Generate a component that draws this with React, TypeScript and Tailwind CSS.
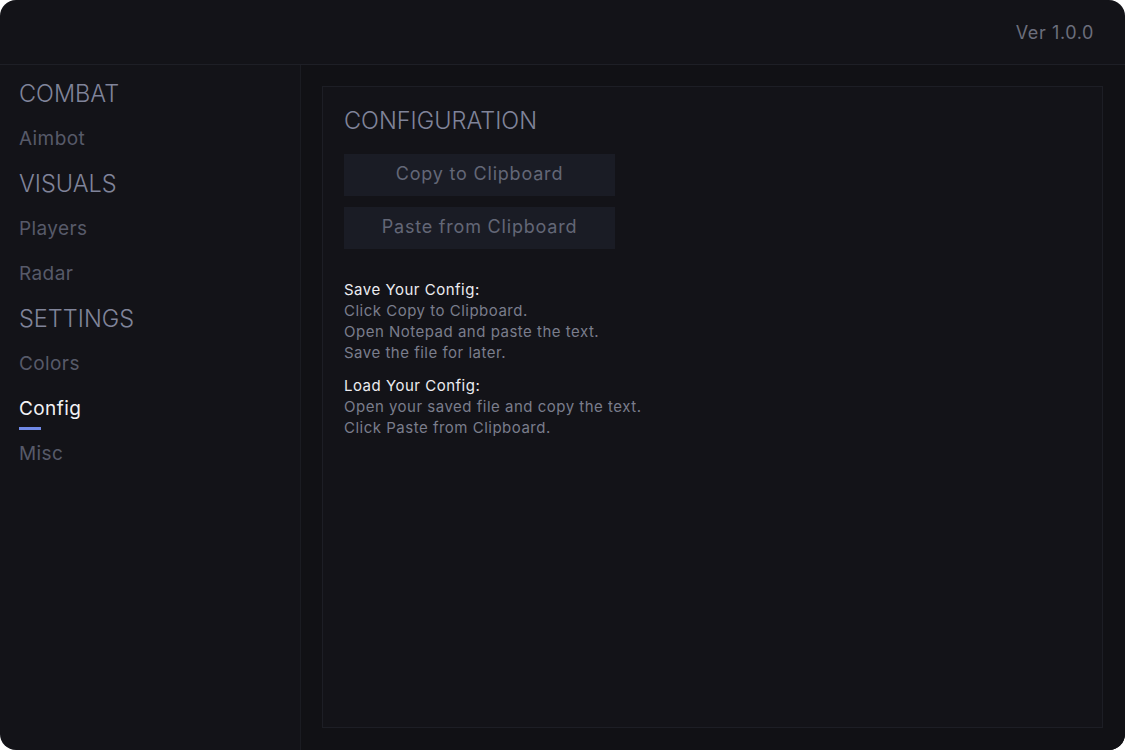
const font = { fontFamily: "Inter, 'Noto Sans', sans-serif" };

const nav = [
  { type: "head", label: "COMBAT" },
  { type: "item", label: "Aimbot" },
  { type: "head", label: "VISUALS" },
  { type: "item", label: "Players" },
  { type: "item", label: "Radar" },
  { type: "head", label: "SETTINGS" },
  { type: "item", label: "Colors" },
  { type: "item", label: "Config", active: true },
  { type: "item", label: "Misc" },
];

export default function App() {
  return (
    <div className="h-[750px] w-[1125px] bg-white" style={font}>
      <div className="flex h-full w-full flex-col overflow-hidden rounded-[16px] bg-[#131318]">
        {/* Header */}
        <div className="flex h-[65px] shrink-0 items-center justify-end border-b border-[#1e1f26] pr-[31px]">
          <span className="text-[18px] tracking-[0.6px] text-[#6b6e7c]">Ver 1.0.0</span>
        </div>

        <div className="flex flex-1">
          {/* Sidebar */}
          <div className="flex w-[301px] shrink-0 flex-col border-r border-[#1b1c22] pl-[19px] pt-[6px]">
            {nav.map((n) =>
              n.type === "head" ? (
                <div key={n.label} className="flex h-[45px] items-center text-[23.5px] font-light text-[#80849a]">
                  {n.label}
                </div>
              ) : (
                <div key={n.label} className="relative flex h-[45px] items-center pt-[2px]">
                  <span
                    className={`text-[19px] tracking-[0.4px] ${n.active ? "text-[#f2f2f5]" : "text-[#575a69]"}`}
                  >
                    {n.label}
                  </span>
                  {n.active && (
                    <div className="absolute bottom-[1px] left-0 h-[3px] w-[22px] bg-[#7089e6]" />
                  )}
                </div>
              )
            )}
          </div>

          {/* Main */}
          <div className="flex-1 bg-[#111115] p-[21px] pb-[22px] pr-[22px]">
            <div className="h-full border border-[#1d1e25] bg-[#131318] px-[21px] pt-[18px]">
              <h1 className="text-[23.5px] font-light leading-[32px] text-[#80849a]">CONFIGURATION</h1>
              <div className="mt-[17px] flex w-[271px] flex-col gap-[11px]">
                <button className="h-[42px] bg-[#1a1c25] pb-[3px] text-[18px] tracking-[0.8px] text-[#636777]">
                  Copy to Clipboard
                </button>
                <button className="h-[42px] bg-[#1a1c25] pb-[3px] text-[18px] tracking-[0.8px] text-[#636777]">
                  Paste from Clipboard
                </button>
              </div>

              <div className="mt-[30px] text-[15px] leading-[21px] tracking-[0.5px]">
                <div className="text-[#ececf0]">Save Your Config:</div>
                <div className="text-[#7a7d8c]">Click Copy to Clipboard.</div>
                <div className="text-[#7a7d8c]">Open Notepad and paste the text.</div>
                <div className="text-[#7a7d8c]">Save the file for later.</div>
                <div className="mt-[12px] text-[#ececf0]">Load Your Config:</div>
                <div className="text-[#7a7d8c]">Open your saved file and copy the text.</div>
                <div className="text-[#7a7d8c]">Click Paste from Clipboard.</div>
              </div>
            </div>
          </div>
        </div>
      </div>
    </div>
  );
}
